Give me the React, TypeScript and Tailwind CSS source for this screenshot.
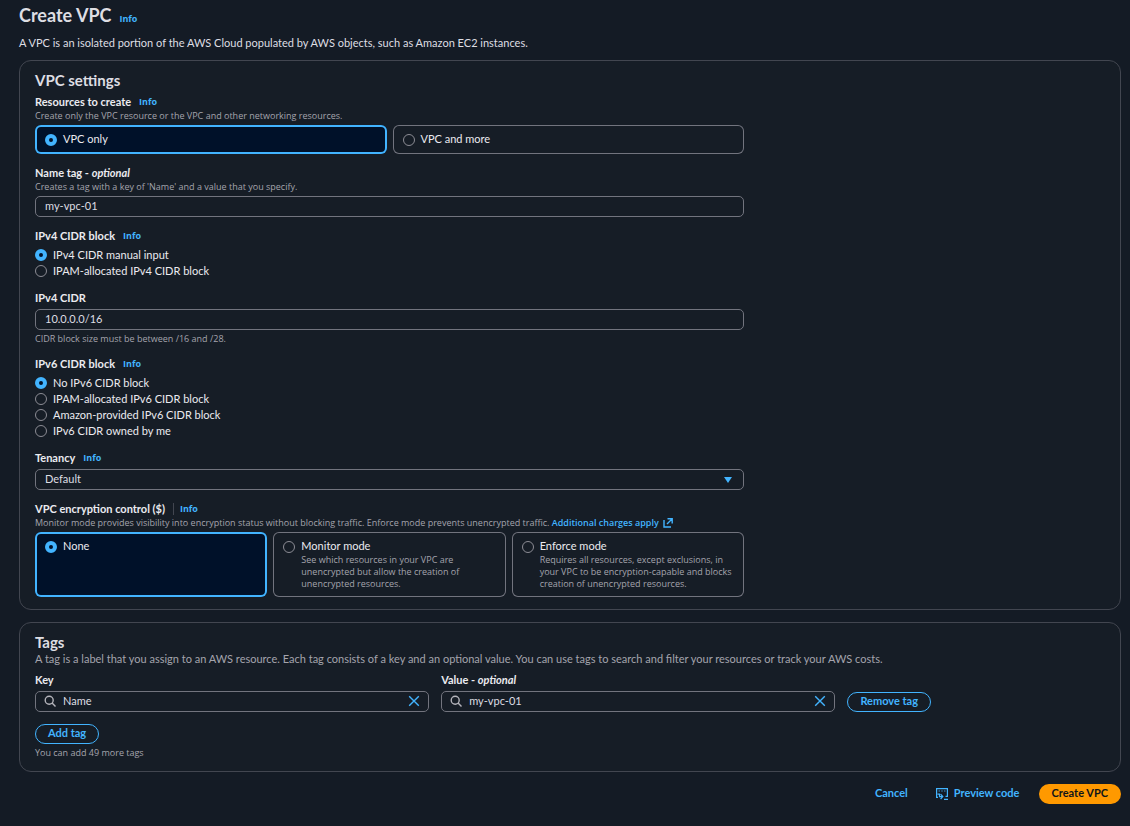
import React, { useState } from 'react';

interface FieldProps {
  label: React.ReactNode;
  htmlFor?: string;
  id?: string;
  info?: boolean;
  divided?: boolean;
  hint?: React.ReactNode;
  children: React.ReactNode;
}

interface TileProps {
  name: string;
  label: string;
  description?: string;
  checked: boolean;
  onSelect: () => void;
}

const IPV4_OPTIONS = ['IPv4 CIDR manual input', 'IPAM-allocated IPv4 CIDR block'];

const IPV6_OPTIONS = [
  'No IPv6 CIDR block',
  'IPAM-allocated IPv6 CIDR block',
  'Amazon-provided IPv6 CIDR block',
  'IPv6 CIDR owned by me',
];

const ENCRYPTION_OPTIONS = [
  { label: 'None' },
  {
    label: 'Monitor mode',
    description: 'See which resources in your VPC are unencrypted but allow the creation of unencrypted resources.',
  },
  {
    label: 'Enforce mode',
    description: 'Requires all resources, except exclusions, in your VPC to be encryption-capable and blocks creation of unencrypted resources.',
  },
];

const radioClass =
  'size-3 shrink-0 appearance-none rounded-full border border-[#8c8c94] checked:border-4 checked:border-[#42b4ff] checked:bg-[#001129]';
const inputClass =
  'h-[21px] w-full rounded-[5px] border border-[#72747e] bg-[#161d26] px-[9px] pb-0.5 text-[11px] leading-4 text-[#dedee3] outline-none focus:border-[#42b4ff]';
const outlineButton =
  'h-5 rounded-full border border-[#42b4ff] px-3 pb-0.5 text-[11px] leading-4 font-bold whitespace-nowrap text-[#42b4ff] hover:bg-[#1d2b3d]';
const hintClass = "font-['Open_Sans',sans-serif] text-[9px] leading-3 text-[#a4a4ad]";

const InfoLink = () => (
  <a href="#info" className="font-['Open_Sans',sans-serif] text-[9px] leading-4 font-bold text-[#42b4ff] hover:underline">
    Info
  </a>
);

const Optional = ({ text }: { text: string }) => (
  <>
    {text} - <i>optional</i>
  </>
);

const SearchIcon = () => (
  <svg className="pointer-events-none absolute top-1 left-[9px]" width="12" height="12" viewBox="0 0 12 12" fill="none" stroke="#b4b4bb" strokeWidth="1.4">
    <circle cx="5.2" cy="5.2" r="4" />
    <path d="M8.1 8.1l3.4 3.4" />
  </svg>
);

const Field = ({ label, htmlFor, id, info, divided, hint, children }: FieldProps) => (
  <div>
    <div className="flex items-center gap-2 text-[11px] leading-4 font-bold text-[#ebebf0]">
      {htmlFor ? <label htmlFor={htmlFor}>{label}</label> : <span id={id}>{label}</span>}
      {divided && <span className="-mr-0.5 h-3 w-px bg-[#424650]" />}
      {info && <InfoLink />}
    </div>
    {hint && <p className={hintClass}>{hint}</p>}
    {children}
  </div>
);

const Tile = ({ name, label, description, checked, onSelect }: TileProps) => (
  <label
    className={`flex cursor-pointer gap-1.5 rounded-md pt-[5px] pr-[5px] pb-[7px] pl-2.5 ring-inset ${
      checked ? 'bg-[#001129] ring-2 ring-[#42b4ff]' : 'ring-1 ring-[#72747e]'
    }`}
  >
    <input type="radio" name={name} checked={checked} onChange={onSelect} className={`${radioClass} mt-1`} />
    <span>
      <span className="block text-[11px] leading-[17px] text-[#ebebf0]">{label}</span>
      {description && <span className={`block ${hintClass}`}>{description}</span>}
    </span>
  </label>
);

const RadioList = ({ name, labelledBy, options }: { name: string; labelledBy: string; options: string[] }) => {
  const [value, setValue] = useState(options[0]);
  return (
    <div role="radiogroup" aria-labelledby={labelledBy} className="mt-[3px] flex flex-col items-start">
      {options.map(option => (
        <label key={option} className="flex cursor-pointer items-center gap-1.5 text-[11px] leading-4 text-[#ebebf0]">
          <input type="radio" name={name} checked={value === option} onChange={() => setValue(option)} className={radioClass} />
          {option}
        </label>
      ))}
    </div>
  );
};

const SearchInput = ({ id, value, onChange }: { id: string; value: string; onChange: (v: string) => void }) => (
  <div className="relative mt-[3px]">
    <SearchIcon />
    <input id={id} type="text" value={value} onChange={e => onChange(e.target.value)} className={`${inputClass} block pl-[27px]`} />
    <button type="button" aria-label="Clear" onClick={() => onChange('')} className="absolute top-1 right-[9px]">
      <svg width="12" height="12" viewBox="0 0 12 12" fill="none" stroke="#42b4ff" strokeWidth="1.4">
        <path d="M1.2 1.2l9.6 9.6M10.8 1.2L1.2 10.8" />
      </svg>
    </button>
  </div>
);

export default function App() {
  const [resources, setResources] = useState('VPC only');
  const [encryption, setEncryption] = useState('None');
  const [nameTag, setNameTag] = useState('my-vpc-01');
  const [cidr, setCidr] = useState('10.0.0.0/16');
  const [tagKey, setTagKey] = useState('Name');
  const [tagValue, setTagValue] = useState('my-vpc-01');

  return (
    <main className="min-h-screen bg-[#141b25] pr-[9px] pb-5 pl-[19px] font-[Lato,sans-serif] text-[11px] leading-4 text-[#dedee3]">
      {/* Header */}
      <header className="pt-[3px]">
        <div className="flex items-baseline gap-2">
          <h1 className="text-lg leading-6 font-bold text-[#dedee3]">Create VPC</h1>
          <InfoLink />
        </div>
        <p className="mt-2 mb-[9px]">
          A VPC is an isolated portion of the AWS Cloud populated by AWS objects, such as Amazon EC2 instances.
        </p>
      </header>

      {/* VPC settings */}
      <section className="rounded-xl border border-[#424650] bg-[#161d26] px-[15px] pt-2.5 pb-3">
        <h2 className="text-[15px] leading-[18px] font-bold text-[#dedee3]">VPC settings</h2>
        <div className="mt-[5px] flex max-w-[709px] flex-col gap-[11px]">
          <Field id="resources" label="Resources to create" info hint="Create only the VPC resource or the VPC and other networking resources.">
            <div role="radiogroup" aria-labelledby="resources" className="mt-[3px] grid grid-cols-2 gap-1.5">
              {['VPC only', 'VPC and more'].map(option => (
                <Tile key={option} name="resources" label={option} checked={resources === option} onSelect={() => setResources(option)} />
              ))}
            </div>
          </Field>

          <Field htmlFor="name-tag" label={<Optional text="Name tag" />} hint="Creates a tag with a key of 'Name' and a value that you specify.">
            <input id="name-tag" type="text" value={nameTag} onChange={e => setNameTag(e.target.value)} className={`${inputClass} mt-[3px] block`} />
          </Field>

          <Field id="ipv4-block" label="IPv4 CIDR block" info>
            <RadioList name="ipv4" labelledBy="ipv4-block" options={IPV4_OPTIONS} />
          </Field>

          <Field htmlFor="ipv4-cidr" label="IPv4 CIDR">
            <input id="ipv4-cidr" type="text" value={cidr} onChange={e => setCidr(e.target.value)} className={`${inputClass} mt-[3px] block`} />
            <p className={`${hintClass} mt-[3px]`}>CIDR block size must be between /16 and /28.</p>
          </Field>

          <Field id="ipv6-block" label="IPv6 CIDR block" info>
            <RadioList name="ipv6" labelledBy="ipv6-block" options={IPV6_OPTIONS} />
          </Field>

          <Field htmlFor="tenancy" label="Tenancy" info>
            <div className="relative mt-[3px]">
              <select id="tenancy" defaultValue="Default" className={`${inputClass} block appearance-none`}>
                <option>Default</option>
                <option>Dedicated</option>
              </select>
              <svg className="pointer-events-none absolute top-2 right-3" width="8" height="6" viewBox="0 0 8 6" fill="#42b4ff">
                <path d="M0 0h8L4 6z" />
              </svg>
            </div>
          </Field>

          <Field
            id="encryption"
            label="VPC encryption control ($)"
            info
            divided
            hint={
              <>
                Monitor mode provides visibility into encryption status without blocking traffic. Enforce mode prevents unencrypted traffic.{' '}
                <a href="#pricing" className="font-semibold text-[#42b4ff] hover:underline">
                  Additional charges apply
                  <svg className="ml-1 inline-block align-[-2px]" width="10" height="10" viewBox="0 0 10 10" fill="none" stroke="currentColor" strokeWidth="1.4">
                    <path d="M1 2v7h7M4 6l5-5M4.500 .8h4.700v4.700" />
                  </svg>
                </a>
              </>
            }
          >
            <div role="radiogroup" aria-labelledby="encryption" className="mt-[3px] grid grid-cols-3 gap-1.5">
              {ENCRYPTION_OPTIONS.map(option => (
                <Tile
                  key={option.label}
                  name="encryption"
                  label={option.label}
                  description={option.description}
                  checked={encryption === option.label}
                  onSelect={() => setEncryption(option.label)}
                />
              ))}
            </div>
          </Field>
        </div>
      </section>

      {/* Tags */}
      <section className="mt-3 rounded-xl border border-[#424650] bg-[#161d26] px-[15px] pt-2.5 pb-3">
        <h2 className="text-[15px] leading-[18px] font-bold text-[#dedee3]">Tags</h2>
        <p className="text-[#a4a4ad]">
          A tag is a label that you assign to an AWS resource. Each tag consists of a key and an optional value. You can use tags to search and filter your resources or track your AWS costs.
        </p>
        <div className="mt-[5px] grid max-w-4xl grid-cols-[1fr_1fr_auto] items-end gap-3">
          <Field htmlFor="tag-key" label="Key">
            <SearchInput id="tag-key" value={tagKey} onChange={setTagKey} />
          </Field>
          <Field htmlFor="tag-value" label={<Optional text="Value" />}>
            <SearchInput id="tag-value" value={tagValue} onChange={setTagValue} />
          </Field>
          <button type="button" className={outlineButton}>Remove tag</button>
        </div>
        <button type="button" className={`${outlineButton} mt-3 block`}>Add tag</button>
        <p className={`${hintClass} mt-[3px]`}>You can add 49 more tags</p>
      </section>

      {/* Actions */}
      <footer className="mt-3 flex items-center justify-end font-bold text-[#42b4ff]">
        <button type="button" className="mr-7 h-5 pb-0.5 hover:underline">Cancel</button>
        <button type="button" className="mr-[19px] flex h-5 items-center gap-1.5 pb-0.5 hover:underline">
          <svg className="mt-0.5" width="12" height="12" viewBox="0 0 12 12" fill="none" stroke="currentColor" strokeWidth="1.2">
            <path d="M2 9.400H.6V.6h10.800v7.800H9.500M2.600 3h1.200M5.400 3h1.200M8.200 3h1.200M1.500 6.200h2v2.400h3M4.600 6.200l2.200 2.400-2.200 2.400M8 11.400h4" />
          </svg>
          Preview code
        </button>
        <button type="submit" className="h-5 rounded-full bg-[#ff9900] px-[13px] pb-0.5 text-[#0f141a] hover:bg-[#ffb347]">Create VPC</button>
      </footer>
    </main>
  );
}
